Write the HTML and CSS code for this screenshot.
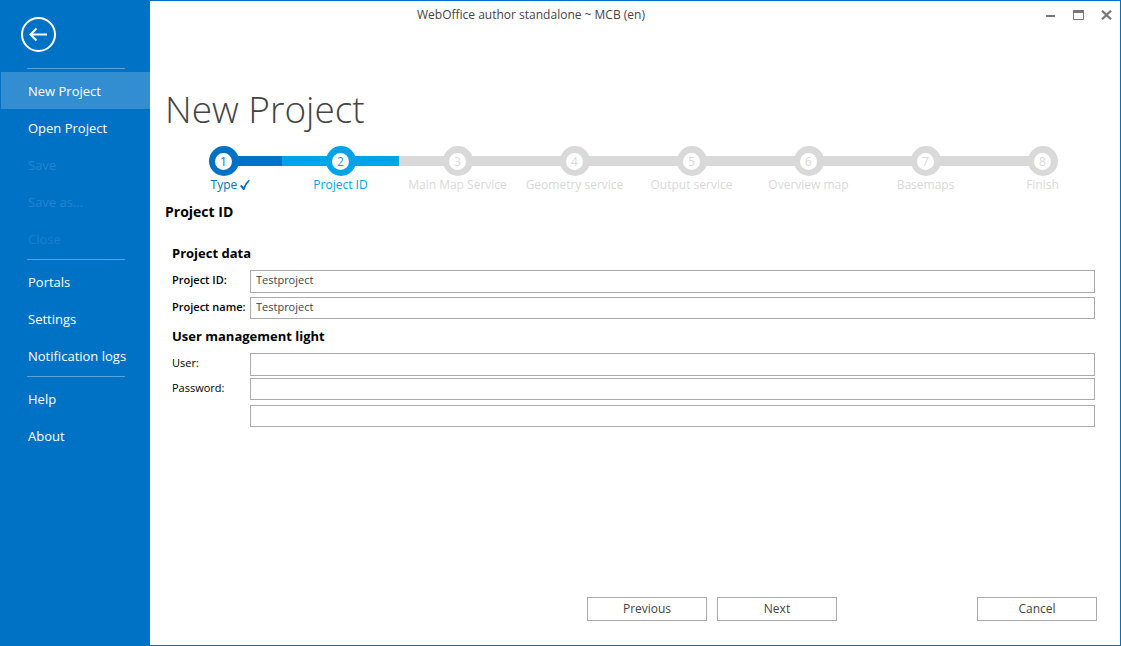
FILE: index.html
```html
<!DOCTYPE html>
<html lang="en">
<head>
<meta charset="utf-8">
<title>WebOffice author standalone ~ MCB (en)</title>
<link rel="stylesheet" href="styles.css">
</head>
<body>
<div class="window">
  <nav class="sidebar" aria-label="Project menu">
    <button class="back" type="button" aria-label="Back">
      <svg width="35" height="35" viewBox="0 0 35 35" fill="none" stroke="#fff" stroke-width="2">
        <circle cx="17.500" cy="17.500" r="16.500"/>
        <path d="M26 17.500H10"/>
        <path d="M15.500 11.500L9.500 17.500L15.500 23.500"/>
      </svg>
    </button>
    <hr class="divider">
    <button class="item item-active" type="button">New Project</button>
    <button class="item" type="button">Open Project</button>
    <button class="item" type="button" disabled>Save</button>
    <button class="item" type="button" disabled>Save as...</button>
    <button class="item item-faint" type="button" disabled>Close</button>
    <hr class="divider">
    <button class="item" type="button">Portals</button>
    <button class="item" type="button">Settings</button>
    <button class="item" type="button">Notification logs</button>
    <hr class="divider">
    <button class="item" type="button">Help</button>
    <button class="item" type="button">About</button>
  </nav>
  <div class="main">
    <header class="titlebar">
      <div class="caption">WebOffice author standalone ~ MCB (en)</div>
      <div class="controls">
        <button class="control" type="button" aria-label="Minimize">
          <svg width="11" height="10" viewBox="0 0 11 10"><path d="M1 5h9v2H1z" fill="#777"/></svg>
        </button>
        <button class="control" type="button" aria-label="Maximize">
          <svg width="11" height="10" viewBox="0 0 11 10"><path d="M.5.5h10v9H.5z" fill="#fff" stroke="#777"/><path d="M0 0h11v3H0z" fill="#777"/></svg>
        </button>
        <button class="control" type="button" aria-label="Close window">
          <svg width="11" height="10" viewBox="0 0 11 10"><path d="M1 .7L10 9.300M10 .7L1 9.300" stroke="#777" stroke-width="2.200"/></svg>
        </button>
      </div>
    </header>
    <main class="content">
      <h1 class="title">New Project</h1>
      <ol class="steps">
        <li class="step step-first step-done"><span class="dot"><span class="num">1</span></span><span class="name">Type <svg class="check" width="10" height="10" viewBox="0 0 10 10"><path d="M0 6L1.500 4.800L3.500 7Q5.500 2.500 8.500 0L10 .6Q6.500 4 4.300 10H3.100Z" fill="#0072c6"/></svg></span></li>
        <li class="step step-current"><span class="dot"><span class="num">2</span></span><span class="name">Project ID</span></li>
        <li class="step"><span class="dot"><span class="num">3</span></span><span class="name">Main Map Service</span></li>
        <li class="step"><span class="dot"><span class="num">4</span></span><span class="name">Geometry service</span></li>
        <li class="step"><span class="dot"><span class="num">5</span></span><span class="name">Output service</span></li>
        <li class="step"><span class="dot"><span class="num">6</span></span><span class="name">Overview map</span></li>
        <li class="step"><span class="dot"><span class="num">7</span></span><span class="name">Basemaps</span></li>
        <li class="step step-last"><span class="dot"><span class="num">8</span></span><span class="name">Finish</span></li>
      </ol>
      <h2 class="subtitle">Project ID</h2>
      <form class="form">
        <h3 class="group">Project data</h3>
        <div class="row">
          <label class="label label-required" for="project-id">Project ID:</label>
          <input class="field field-tall" id="project-id" type="text" value="Testproject">
        </div>
        <div class="row">
          <label class="label label-required" for="project-name">Project name:</label>
          <input class="field" id="project-name" type="text" value="Testproject">
        </div>
        <h3 class="group">User management light</h3>
        <div class="row row-tight">
          <label class="label" for="user">User:</label>
          <input class="field field-tall" id="user" type="text">
        </div>
        <div class="row">
          <label class="label" for="password">Password:</label>
          <input class="field" id="password" type="password">
        </div>
        <div class="row">
          <span class="label"></span>
          <input class="field" type="password" aria-label="Repeat password">
        </div>
      </form>
    </main>
    <footer class="actions">
      <button class="button" type="button">Previous</button>
      <button class="button" type="button">Next</button>
      <button class="button button-cancel" type="button">Cancel</button>
    </footer>
  </div>
</div>
</body>
</html>
```
FILE: styles.css
```css
* {
  box-sizing: border-box;
}

body {
  margin: 0;
  font-family: "Open Sans", "Noto Sans", sans-serif;
  font-size: 12px;
  color: #444;
}

button {
  font: inherit;
  color: inherit;
  cursor: pointer;
}

.window {
  display: flex;
  min-height: 100vh;
  border: 1px solid #0072c6;
  background: #fff;
}

.sidebar {
  flex: 0 0 149px;
  background: #0072c6;
  color: #fff;
  font-size: 13px;
}

.back {
  display: block;
  margin: 16px 0 16px 20px;
  padding: 0;
  border: 0;
  background: none;
}

.back svg {
  display: block;
}

.divider {
  height: 1px;
  margin: 2px 25px 3px 26px;
  border: 0;
  background: #5ba4da;
}

.item {
  display: block;
  width: 100%;
  height: 37px;
  padding: 0 0 0 27px;
  border: 0;
  background: none;
  text-align: left;
  white-space: nowrap;
}

.item-active {
  background: #338ed1;
}

.item:disabled {
  color: #2485ce;
}

.item-faint:disabled {
  color: #1a7fcc;
}

.main {
  flex: 1;
  display: flex;
  flex-direction: column;
  min-width: 0;
}

.titlebar {
  display: flex;
  height: 28px;
}

.caption {
  flex: 1;
  padding-right: 124px;
  line-height: 28px;
  text-align: center;
}

.controls {
  display: flex;
}

.control {
  display: flex;
  align-items: center;
  justify-content: center;
  width: 28px;
  padding: 0;
  border: 0;
  background: none;
}

.content {
  flex: 1;
  padding: 52px 19px 0 15px;
}

.title {
  margin: 0;
  font-size: 37px;
  font-weight: 300;
  line-height: 56px;
}

.steps {
  display: grid;
  grid-template-columns: repeat(8, 1fr);
  margin: 9px 0 0;
  padding: 0;
  list-style: none;
  color: #d9d9d9;
  text-align: center;
}

.step {
  background: linear-gradient(currentColor, currentColor) 0 10px / 100% 10px no-repeat;
}

.step-first {
  background-position: right 10px;
  background-size: 50% 10px;
}

.step-last {
  background-size: 50% 10px;
}

.step-done {
  color: #0072c6;
}

.step-done .name {
  padding-left: 14px;
}

.step-current {
  color: #00a2e8;
}

.dot {
  display: flex;
  align-items: center;
  justify-content: center;
  width: 30px;
  height: 30px;
  margin: 0 auto;
  border-radius: 50%;
  background: currentColor;
}

.num {
  width: 17px;
  height: 17px;
  border-radius: 50%;
  background: #fff;
  line-height: 17px;
}

.name {
  display: block;
  line-height: 18px;
  white-space: nowrap;
}

.check {
  vertical-align: -1px;
}

.subtitle {
  margin: 8px 0 0;
  color: #000;
  font-size: 14px;
  line-height: 20px;
}

.form {
  padding: 21px 6px 0 7px;
  color: #000;
}

.group {
  margin: 0 0 7px;
  font-size: 13px;
  line-height: 20px;
}

.row {
  display: flex;
  align-items: flex-start;
  height: 27px;
}

.row + .group {
  margin-top: 2px;
}

.row-tight {
  height: 25px;
}

.label {
  flex: 0 0 78px;
  font-size: 11px;
  line-height: 20px;
  white-space: nowrap;
}

.label-required {
  font-weight: 600;
}

.field {
  flex: 1;
  min-width: 0;
  height: 22px;
  padding: 0 5px 3px;
  border: 1px solid #ababab;
  background: #fff;
  color: #444;
  font: inherit;
  font-size: 11px;
}

.field-tall {
  height: 23px;
  padding-bottom: 4px;
}

.actions {
  display: flex;
  justify-content: flex-end;
  gap: 10px;
  padding: 0 23px 24px;
}

.button {
  width: 120px;
  height: 24px;
  padding: 0 0 1px;
  border: 1px solid #ababab;
  background: #fff;
}

.button-cancel {
  margin-left: 130px;
}
```
